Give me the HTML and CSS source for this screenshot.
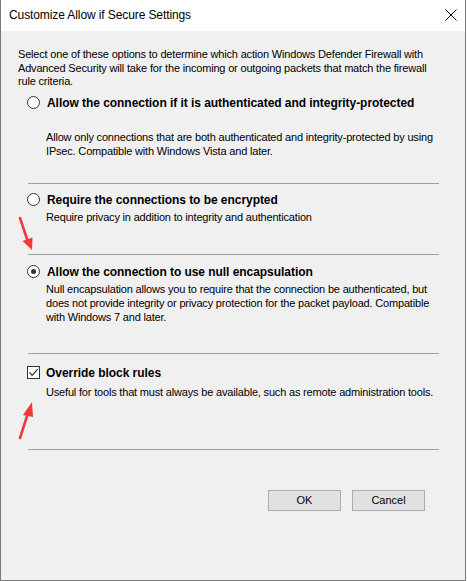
FILE: index.html
```html
<!DOCTYPE html>
<html>
<head>
<meta charset="utf-8">
<link rel="stylesheet" href="styles.css">
</head>
<body>
<div class="window">
  <div class="titlebar">
    <span class="title">Customize Allow if Secure Settings</span>
    <svg class="close" width="12" height="12" viewBox="0 0 12 12"><path d="M0.5 0.5 L11.5 11.5 M11.5 0.5 L0.5 11.5" stroke="#000" stroke-width="1" fill="none"/></svg>
  </div>
  <div class="content">
    <p class="intro">Select one of these options to determine which action Windows Defender Firewall with Advanced Security will take for the incoming or outgoing packets that match the firewall rule criteria.</p>

    <div class="option opt1">
      <div class="row"><span class="radio"></span><span class="label">Allow the connection if it is authenticated and integrity-protected</span></div>
      <p class="desc d1">Allow only connections that are both authenticated and integrity-protected by using IPsec. Compatible with Windows Vista and later.</p>
    </div>
    <div class="sep s1"></div>

    <div class="option opt2">
      <div class="row"><span class="radio"></span><span class="label">Require the connections to be encrypted</span></div>
      <p class="desc d2">Require privacy in addition to integrity and authentication</p>
    </div>
    <div class="sep s2"></div>

    <div class="option opt3">
      <div class="row"><span class="radio checked"></span><span class="label">Allow the connection to use null encapsulation</span></div>
      <p class="desc d3">Null encapsulation allows you to require that the connection be authenticated, but does not provide integrity or privacy protection for the packet payload. Compatible with Windows 7 and later.</p>
    </div>
    <div class="sep s3"></div>

    <div class="option opt4">
      <div class="row"><span class="check"><svg width="11" height="11" viewBox="0 0 11 11"><path d="M1.5 5.5 L4.2 8.3 L9.6 2.2" stroke="#333" stroke-width="1.2" fill="none"/></svg></span><span class="label">Override block rules</span></div>
      <p class="desc d4">Useful for tools that must always be available, such as remote administration tools.</p>
    </div>
    <div class="sep s4"></div>

    <div class="buttons">
      <button class="btn">OK</button>
      <button class="btn">Cancel</button>
    </div>
  </div>

  <svg class="arrow a1" width="20" height="40" viewBox="0 0 20 40"><path d="M4 2 L12 26" stroke="#f0393a" stroke-width="2.6" stroke-linecap="round" fill="none"/><path d="M6.5 25 L16.5 21.5 L16 34 Z" fill="#f0393a"/></svg>
  <svg class="arrow a2" width="20" height="46" viewBox="0 0 20 46"><path d="M4 41 L12 16" stroke="#f0393a" stroke-width="2.6" stroke-linecap="round" fill="none"/><path d="M7 18 L17 20 L16 5 Z" fill="#f0393a"/></svg>
</div>
</body>
</html>
```

FILE: styles.css
```css
html, body {
  margin: 0;
  padding: 0;
  background: #ffffff;
}
.window {
  position: relative;
  width: 466px;
  height: 581px;
  box-sizing: border-box;
  border-left: 1px solid #7a7a7a;
  border-right: 1px solid #7a7a7a;
  border-bottom: 1px solid #7a7a7a;
  background: #f0f0f0;
  font-family: "Liberation Sans", Arial, sans-serif;
  font-size: 11px;
  letter-spacing: -0.18px;
  color: #000;
  overflow: hidden;
}
.titlebar {
  height: 31px;
  background: #ffffff;
  display: flex;
  align-items: center;
  justify-content: space-between;
  padding: 0 8px 0 8px;
}
.title {
  font-size: 12px;
  letter-spacing: -0.1px;
  margin-top: -1px;
}
.close {
  margin-top: -1px;
}
.content {
  padding: 0 0 0 17px;
}
.intro {
  margin: 17px 0 0 0;
  line-height: 13.5px;
  width: 420px;
}
.option {
  padding-left: 9px;
}
.row {
  display: flex;
  align-items: center;
  height: 14px;
}
.radio {
  width: 11px;
  height: 11px;
  border: 1px solid #333;
  border-radius: 50%;
  background: #fff;
  box-sizing: content-box;
  margin-right: 7px;
  display: flex;
  align-items: center;
  justify-content: center;
  flex: none;
}
.radio.checked::after {
  content: "";
  width: 5px;
  height: 5px;
  border-radius: 50%;
  background: #333;
}
.check {
  width: 11px;
  height: 11px;
  border: 1px solid #333;
  background: #fff;
  margin-right: 6px;
  flex: none;
  display: flex;
}
.label {
  font-weight: bold;
  font-size: 12px;
  letter-spacing: -0.05px;
}
.desc {
  margin: 0 0 0 19px;
  line-height: 14px;
  width: 398px;
}
.opt1 { margin-top: 7px; }
.d1 { margin-top: 20px; }
.sep {
  margin-left: 10px;
  width: 411px;
  height: 1px;
  background: #a0a0a0;
}
.s1 { margin-top: 25px; }
.opt2 { margin-top: 9px; }
.d2 { margin-top: 3px; }
.s2 { margin-top: 30px; }
.opt3 { margin-top: 10px; }
.d3 { margin-top: 3px; }
.s3 { margin-top: 29px; }
.opt4 { margin-top: 12px; }
.d4 { margin-top: 5px; }
.s4 { margin-top: 50px; }
.buttons {
  margin-top: 40px;
  display: flex;
  gap: 11px;
  padding-left: 250px;
}
.btn {
  width: 73px;
  height: 21px;
  background: #e1e1e1;
  border: 1px solid #adadad;
  font-family: "Liberation Sans", Arial, sans-serif;
  font-size: 11px;
  color: #000;
  padding: 0;
}
.arrow {
  position: absolute;
}
.a1 { left: 15px; top: 216px; }
.a2 { left: 15px; top: 397px; }
```
